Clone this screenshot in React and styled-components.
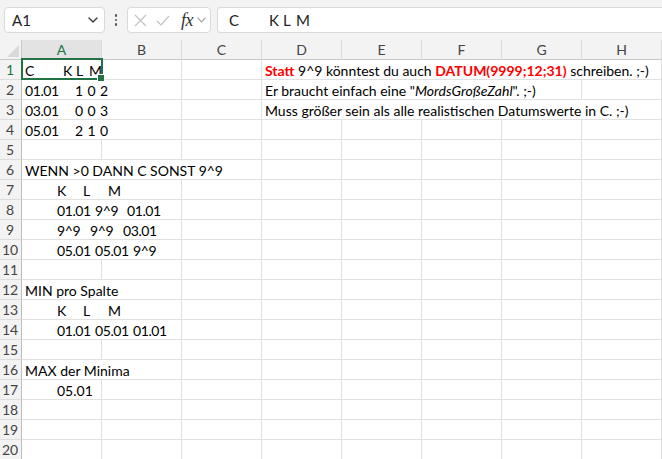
import React from 'react';
import styled, { createGlobalStyle } from 'styled-components';

const FONT = `"Lato", "Open Sans", "Noto Sans", sans-serif`;

const Global = createGlobalStyle`
  html, body { margin: 0; padding: 0; background: #fff; overflow: hidden; }
  body { font-family: ${FONT}; }
  * { box-sizing: border-box; }
`;

const Shell = styled.div`
  width: 662px;
  height: 459px;
  overflow: hidden;
  display: flex;
  flex-direction: column;
  background: #fff;
`;

const Toolbar = styled.div`
  height: 40px;
  flex: none;
  background: #f3f3f3;
  display: flex;
  align-items: flex-start;
  padding: 7px 0 0 4px;
`;

const Box = styled.div`
  height: 26px;
  background: #fff;
  border: 1px solid #dadada;
  border-radius: 4px;
  display: flex;
  align-items: center;
`;

const NameBox = styled(Box)`
  width: 101px;
  flex: none;
  padding: 0 6px 0 7px;
  justify-content: space-between;
  font-size: 15px;
  color: #222;
`;

const Dots = styled.div`
  width: 22px;
  height: 26px;
  flex: none;
  display: flex;
  flex-direction: column;
  align-items: center;
  justify-content: center;
  gap: 2px;
  span {
    width: 2.5px;
    height: 2.5px;
    border-radius: 50%;
    background: #555;
  }
`;

const FnBox = styled(Box)`
  width: 84px;
  flex: none;
  padding: 0 0 0 6px;
  gap: 9px;
`;

const Fx = styled.span`
  font-family: "Liberation Serif", serif;
  font-style: italic;
  font-size: 18px;
  color: #333;
  margin-left: 2px;
  margin-right: -5px;
  letter-spacing: -0.5px;
`;

const InputBox = styled(Box)`
  flex: 1;
  margin-left: 6px;
  border-right: none;
  border-radius: 4px 0 0 4px;
  padding-left: 11px;
  font-size: 15px;
  color: #222;
  white-space: nowrap;
`;

const Sheet = styled.div`
  flex: 1;
  display: flex;
  flex-direction: column;
  overflow: hidden;
`;

const Row = styled.div`
  display: flex;
  flex: none;
  height: 20px;
`;

const Corner = styled.div`
  width: 22px;
  height: 20px;
  flex: none;
  background: #f3f3f3;
  border-right: 1px solid #c8c8c8;
  border-bottom: 1px solid #c8c8c8;
  display: flex;
  align-items: flex-end;
  justify-content: flex-end;
  padding: 0 2px 2px 0;
`;

const ColHead = styled.div`
  width: 80px;
  flex: none;
  height: 20px;
  background: ${(p) => (p.$active ? '#e3e3e3' : '#f3f3f3')};
  color: ${(p) => (p.$active ? '#217346' : '#444')};
  border-right: 1px solid #dcdcdc;
  border-bottom: ${(p) => (p.$active ? '2px solid #217346' : '1px solid #c8c8c8')};
  font-size: 14px;
  display: flex;
  align-items: center;
  justify-content: center;
  padding-top: ${(p) => (p.$active ? '1px' : '0')};
`;

const RowHead = styled.div`
  width: 22px;
  flex: none;
  height: 20px;
  background: #f3f3f3;
  color: ${(p) => (p.$active ? '#217346' : '#444')};
  border-right: 1px solid #bdbdbd;
  border-bottom: 1px solid #dcdcdc;
  font-size: 14px;
  display: flex;
  align-items: center;
  justify-content: center;
  padding-right: 1px;
`;

const Cell = styled.div`
  position: relative;
  width: ${(p) => (p.$span || 1) * 80}px;
  flex: none;
  height: 20px;
  border-right: 1px solid #e1e1e1;
  border-bottom: 1px solid #e1e1e1;
  padding: 0 0 0 ${(p) => 3 + (p.$indent || 0)}px;
  font-size: 14px;
  line-height: 21px;
  color: #000;
  white-space: pre;
  overflow: visible;
`;

const Seg = styled.span`
  display: inline-block;
  width: ${(p) => (p.$w ? `${p.$w}px` : 'auto')};
  letter-spacing: -0.4px;
`;

const Red = styled.b`
  color: #ff0000;
  font-weight: 700;
`;

const Selection = styled.div`
  position: absolute;
  left: -1px;
  top: -2px;
  width: 82px;
  height: 22px;
  border: 2px solid #217346;
  pointer-events: none;
  &::after {
    content: '';
    position: absolute;
    right: -4px;
    bottom: -4px;
    width: 6px;
    height: 6px;
    background: #217346;
    border: 1px solid #fff;
  }
`;

const Chevron = ({ color = '#333', w = 10, h = 6 }) => (
  <svg width={w} height={h} viewBox="0 0 10 6" fill="none">
    <path d="M1 1 L5 5 L9 1" stroke={color} strokeWidth="1.3" strokeLinecap="round" strokeLinejoin="round" />
  </svg>
);

const CrossIcon = () => (
  <svg width="13" height="13" viewBox="0 0 13 13" fill="none">
    <path d="M1 1 L12 12 M12 1 L1 12" stroke="#c2c2c2" strokeWidth="1.2" />
  </svg>
);

const CheckIcon = () => (
  <svg width="14" height="11" viewBox="0 0 14 11" fill="none">
    <path d="M1 6 L5 10 L13 1" stroke="#c2c2c2" strokeWidth="1.2" />
  </svg>
);

const Triangle = () => (
  <svg width="12" height="12" viewBox="0 0 12 12">
    <polygon points="0,12 12,12 12,0" fill="#dadada" />
  </svg>
);

const COLS = ['A', 'B', 'C', 'D', 'E', 'F', 'G', 'H'];

const segs = (list) =>
  list.map(([t, w], i) => (
    <Seg key={i} $w={w}>
      {t}
    </Seg>
  ));

const line1 = (
  <>
    <Red>Statt</Red> 9^9 könntest du auch <Red>DATUM(9999;12;31)</Red> schreiben. ;-)
  </>
);
const line2 = (
  <>
    Er braucht einfach eine "<i>MordsGroßeZahl</i>". ;-)
  </>
);
const line3 = <>Muss größer sein als alle realistischen Datumswerte in C. ;-)</>;

const singles = (n) => Array.from({ length: n }, () => ({}));

const ROWS = [
  [{ span: 2, sel: true, content: segs([['C', 38], ['K', 13], ['L', 13], ['M']]) }, {}, { span: 5, content: line1 }],
  [{ span: 2, content: segs([['01.01', 50], ['1', 12.5], ['0', 12.5], ['2']]) }, {}, { span: 4, content: line2 }, {}],
  [{ span: 2, content: segs([['03.01', 50], ['0', 12.5], ['0', 12.5], ['3']]) }, {}, { span: 5, content: line3 }],
  [{ span: 2, content: segs([['05.01', 50], ['2', 12.5], ['1', 12.5], ['0']]) }, ...singles(6)],
  singles(8),
  [{ span: 3, content: 'WENN >0 DANN C SONST 9^9' }, ...singles(5)],
  [{ span: 2, indent: 32, content: segs([['K', 26], ['L', 25], ['M']]) }, ...singles(6)],
  [{ span: 2, indent: 32, content: segs([['01.01', 38], ['9^9', 32], ['01.01']]) }, ...singles(6)],
  [{ span: 2, indent: 32, content: segs([['9^9', 33], ['9^9', 33], ['03.01']]) }, ...singles(6)],
  [{ span: 2, indent: 32, content: segs([['05.01', 38], ['05.01', 38], ['9^9']]) }, ...singles(6)],
  singles(8),
  [{ span: 2, content: 'MIN pro Spalte' }, ...singles(6)],
  [{ span: 2, indent: 32, content: segs([['K', 26], ['L', 25], ['M']]) }, ...singles(6)],
  [{ span: 2, indent: 32, content: segs([['01.01', 38], ['05.01', 38], ['01.01']]) }, ...singles(6)],
  singles(8),
  [{ span: 2, content: 'MAX der Minima' }, ...singles(6)],
  [{ indent: 32, content: '05.01' }, ...singles(7)],
  singles(8),
  singles(8),
  singles(8),
];

export default function App() {
  return (
    <>
      <Global />
      <Shell>
        <Toolbar>
          <NameBox>
            <span>A1</span>
            <Chevron />
          </NameBox>
          <Dots>
            <span />
            <span />
            <span />
          </Dots>
          <FnBox>
            <CrossIcon />
            <CheckIcon />
            <Fx>fx</Fx>
            <Chevron color="#a0a0a0" w={9} h={6} />
          </FnBox>
          <InputBox>
            {segs([['C', 40], ['K', 14], ['L', 13], ['M']])}
          </InputBox>
        </Toolbar>
        <Sheet>
          <Row>
            <Corner>
              <Triangle />
            </Corner>
            {COLS.map((c) => (
              <ColHead key={c} $active={c === 'A'}>
                {c}
              </ColHead>
            ))}
          </Row>
          {ROWS.map((cells, r) => (
            <Row key={r}>
              <RowHead $active={r === 0}>{r + 1}</RowHead>
              {cells.map((cell, i) => (
                <Cell key={i} $span={cell.span} $indent={cell.indent}>
                  {cell.content}
                  {cell.sel && <Selection />}
                </Cell>
              ))}
            </Row>
          ))}
        </Sheet>
      </Shell>
    </>
  );
}
